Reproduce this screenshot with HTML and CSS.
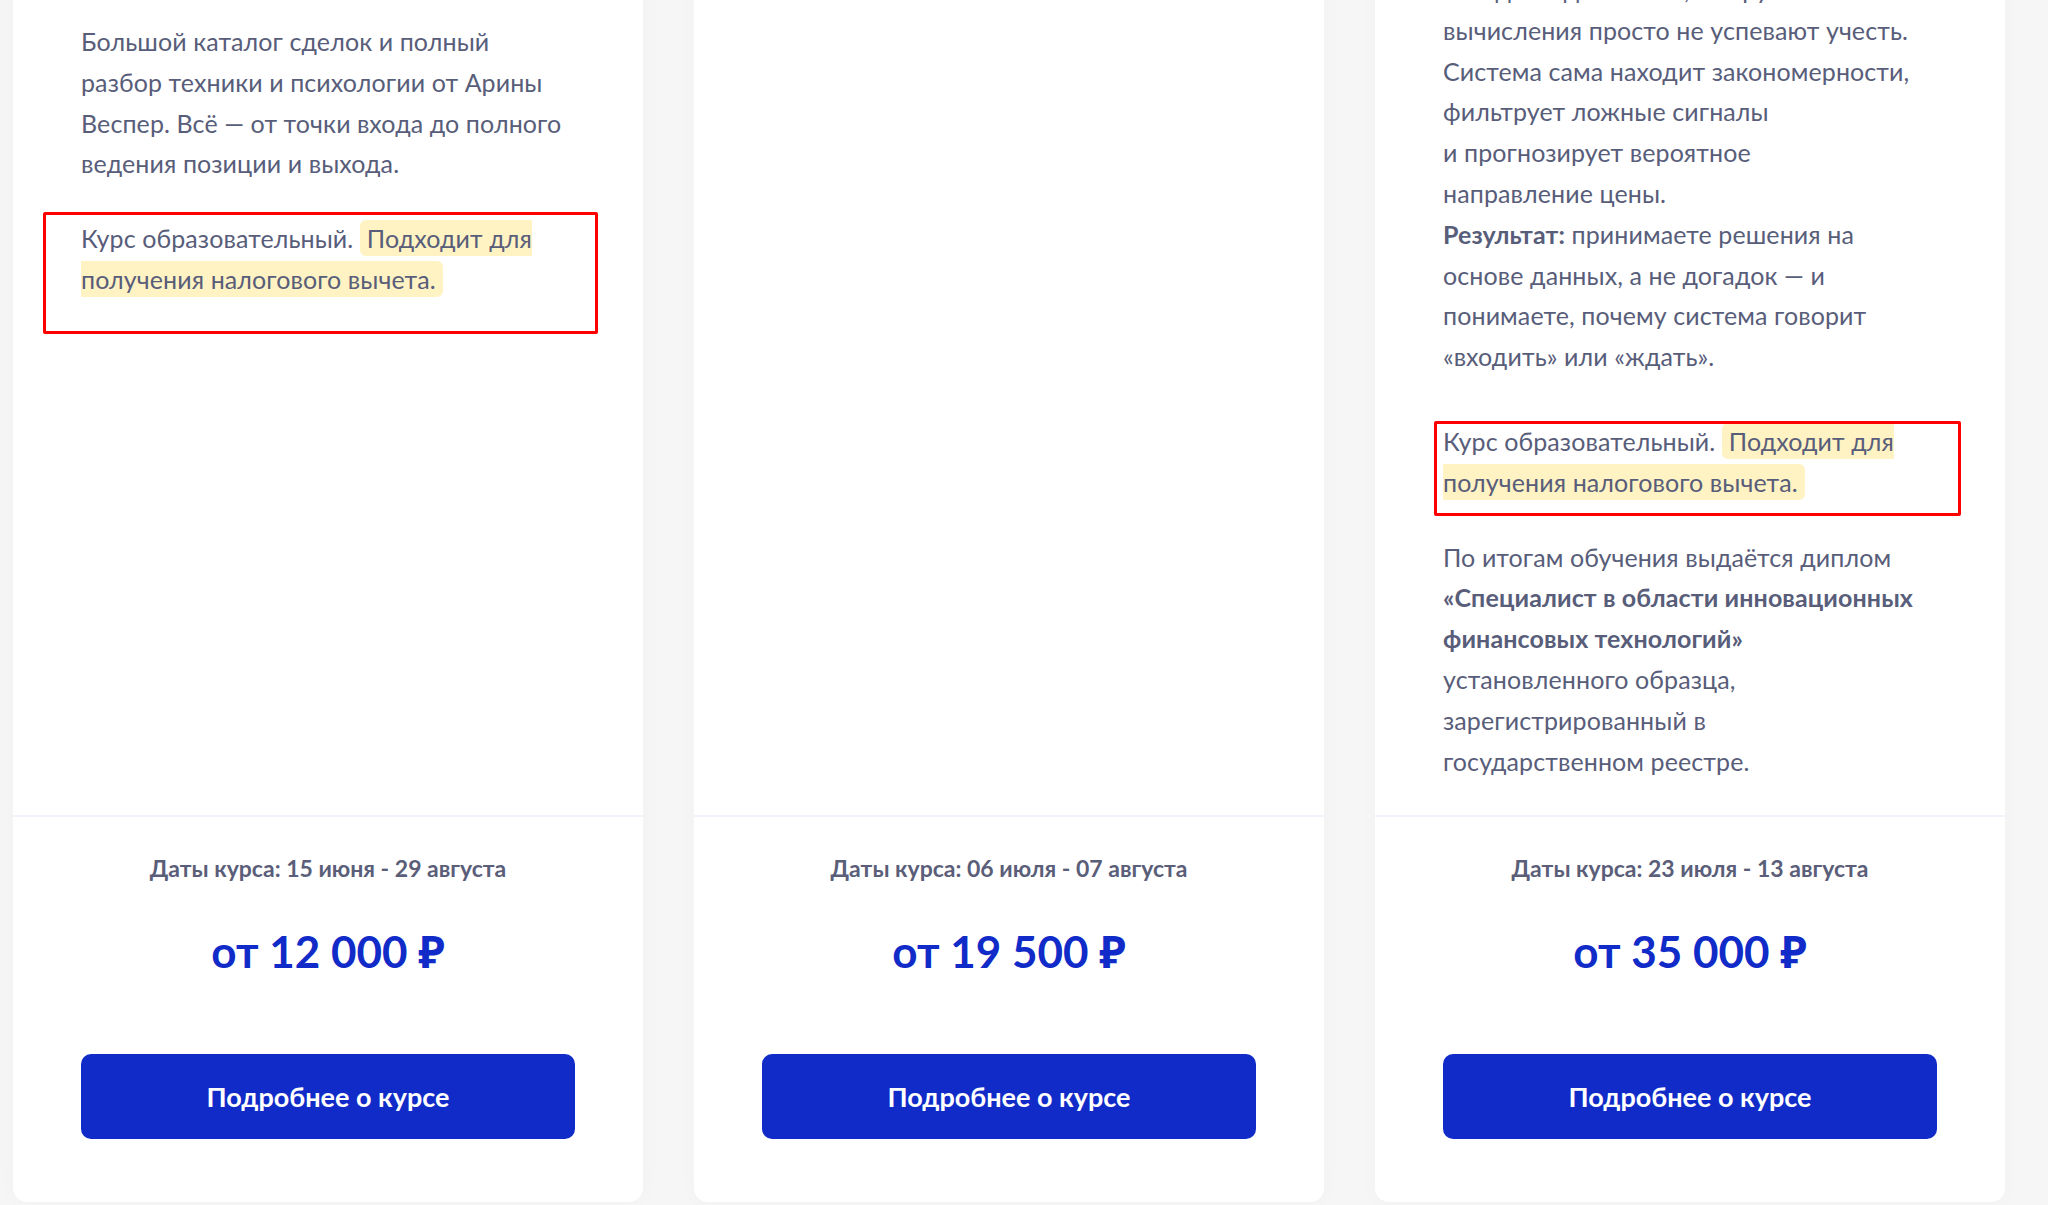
FILE: index.html
```
<html>
<head>
	<meta charset="utf-8" />
	<title>Курсы</title>
	<link rel="stylesheet" href="styles.css">
</head>

<body>
	<div class="courses">
		<div class="course">
			<div class="course-body">
				<p>Большой каталог сделок и полный<br>разбор техники и психологии от Арины<br>Веспер. Всё — от точки входа до полного<br>ведения позиции и выхода.</p>
				<p class="note">Курс образовательный. <span class="hl">Подходит для<br>получения налогового вычета.</span><span class="frame frame-wide"></span></p>
			</div>
			<div class="course-footer">
				<div class="dates">Даты курса: 15 июня - 29 августа</div>
				<div class="price">от 12 000 ₽</div>
				<a class="btn" href="#">Подробнее о курсе</a>
			</div>
		</div>

		<div class="course">
			<div class="course-body"></div>
			<div class="course-footer">
				<div class="dates">Даты курса: 06 июля - 07 августа</div>
				<div class="price">от 19 500 ₽</div>
				<a class="btn" href="#">Подробнее о курсе</a>
			</div>
		</div>

		<div class="course">
			<div class="course-body">
				<p class="long">находит в данных то, что ручные<br>вычисления просто не успевают учесть.<br>Система сама находит закономерности,<br>фильтрует ложные сигналы<br>и прогнозирует вероятное<br>направление цены.<br><b>Результат:</b> принимаете решения на<br>основе данных, а не догадок — и<br>понимаете, почему система говорит<br>«входить» или «ждать».</p>
				<p class="note">Курс образовательный. <span class="hl">Подходит для<br>получения налогового вычета.</span><span class="frame frame-tight"></span></p>
				<p>По итогам обучения выдаётся диплом<br><b>«Специалист в области инновационных<br>финансовых технологий»</b><br>установленного образца,<br>зарегистрированный в<br>государственном реестре.</p>
			</div>
			<div class="course-footer">
				<div class="dates">Даты курса: 23 июля - 13 августа</div>
				<div class="price">от 35 000 ₽</div>
				<a class="btn" href="#">Подробнее о курсе</a>
			</div>
		</div>
	</div>
</body>
</html>
```

FILE: styles.css
```
:root {
	--text-color: #585d7a;
	--brand-blue: #102bc8;
	--highlight: #fff2c3;
}

body {
	margin: 0;
	background-color: #f6f6f7;
	font-family: "Lato", "Noto Sans", sans-serif;
	color: var(--text-color);
}

/* page is scrolled, card tops sit above the fold */
.courses {
	display: flex;
	gap: 51px;
	margin-top: -60px;
	padding: 0 13px;
}

.course {
	flex: 0 0 630px;
	display: flex;
	flex-direction: column;
	background-color: #fff;
	border-radius: 14px;
	box-shadow: 0 0 24px rgba(0, 0, 0, 0.025);
}

.course-body {
	flex: 1;
	padding: 81px 68px 34px;
	font-size: 25px;
	line-height: 40.8px;
	letter-spacing: 0.1px;
}

.course-body p {
	margin: 0 0 34px;
}

.course-body p:last-child {
	margin-bottom: 0;
}

.course-body b {
	font-weight: 700;
}

.course-body .long {
	margin-top: -52px;
	margin-bottom: 44px;
}

.note {
	position: relative;
}

.hl {
	background-color: var(--highlight);
	padding: 3px 7px;
	border-radius: 6px;
}

/* red outline drawn over the tax note */
.frame {
	position: absolute;
	border: 3.5px solid #ff0000;
	border-radius: 2px;
}

.frame-wide {
	left: -38px;
	right: -23px;
	top: -6px;
	bottom: -34px;
}

.frame-tight {
	left: -9px;
	right: -24px;
	top: 0;
	bottom: -13px;
}

.course-footer {
	border-top: 2px solid #f1f2fc;
	padding: 39px 68px 63px;
	text-align: center;
}

.dates {
	font-size: 23px;
	line-height: 24px;
	font-weight: 700;
	color: #5a5e79;
}

.price {
	margin-top: 43px;
	font-size: 44px;
	line-height: 56px;
	font-weight: 700;
	color: var(--brand-blue);
}

.btn {
	display: flex;
	align-items: center;
	justify-content: center;
	margin-top: 75px;
	height: 85px;
	border-radius: 10px;
	background-color: var(--brand-blue);
	color: #fff;
	font-size: 27px;
	font-weight: 700;
	text-decoration: none;
}
```
